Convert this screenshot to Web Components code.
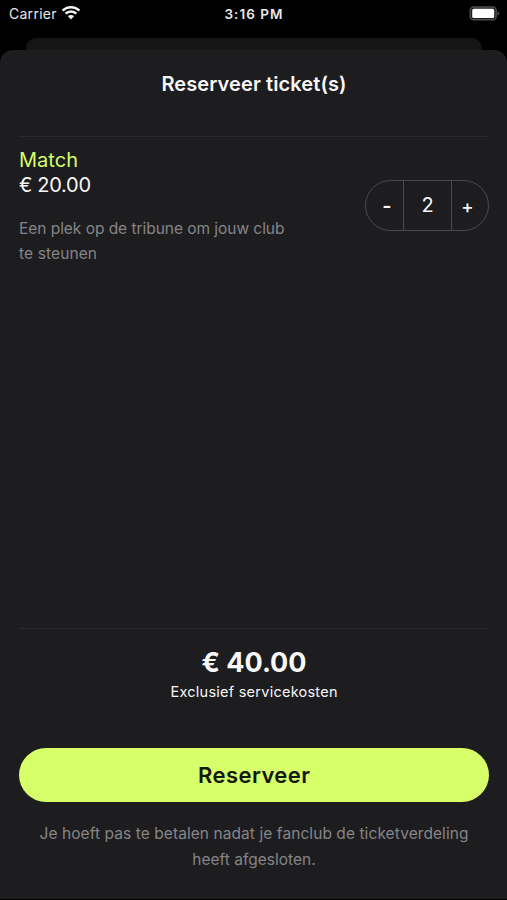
<!DOCTYPE html>
<html lang="nl">
<head>
<meta charset="utf-8">
<title>Reserveer ticket(s)</title>
<style>
html, body { margin: 0; height: 100%; background: #000; overflow: hidden; }
body { font-family: Inter, "Liberation Sans", sans-serif; color: #f7f7f8; }
</style>
</head>
<body>
<ticket-app></ticket-app>
<script>
const define = (name, html) => customElements.define(name, class extends HTMLElement {
  constructor() {
    super();
    this.attachShadow({ mode: 'open' }).innerHTML = html;
  }
});

// One line of text, tracked so that it fills the measure given in "width".
customElements.define('text-line', class extends HTMLElement {
  connectedCallback() {
    const root = this.attachShadow({ mode: 'open' });
    root.innerHTML = `<style>
      :host { display: block; white-space: nowrap; }
      span { display: inline-block; }
    </style><span></span>`;
    const span = root.querySelector('span');
    span.textContent = this.getAttribute('text');
    const measure = parseFloat(this.getAttribute('width'));
    const count = span.textContent.length;
    const gap = (measure - span.getBoundingClientRect().width) / (count - 1);
    span.style.letterSpacing = gap.toFixed(3) + 'px';
    span.style.marginRight = (-gap).toFixed(3) + 'px';
  }
});

define('wifi-icon', `<style>:host { display: block; width: 20px; height: 15px; } svg { display: block; }</style>
<svg width="20" height="15" viewBox="0 0 20 15" fill="none" stroke="#f4f4f4" stroke-width="2.5">
  <path d="M1.6 5.6 C6.2 1 13.8 1 18.4 5.6"/>
  <path d="M4.6 8.7 C7.6 5.8 12.4 5.8 15.4 8.7"/>
  <path d="M10 14.4 L6.9 11.2 C8.6 9.6 11.4 9.6 13.1 11.2Z" fill="#f4f4f4" stroke="none"/>
</svg>`);

define('battery-icon', `<style>:host { display: block; width: 31px; height: 15px; } svg { display: block; }</style>
<svg width="31" height="15" viewBox="0 0 31 15">
  <rect x="1.2" y="1" width="26" height="12.8" rx="3.6" fill="#1c1c1d" stroke="#4e4e50" stroke-width="1.4"/>
  <rect x="3.2" y="2.8" width="22" height="9.2" rx="1.6" fill="#fff"/>
  <path d="M28.6 5.2 C30.6 5.8 30.6 9 28.6 9.6Z" fill="#58585a"/>
</svg>`);

define('status-bar', `<style>
  :host { display: grid; grid-template-columns: 1fr auto 1fr; height: 38px; box-sizing: border-box; padding: 5px 7px 0 9px; font-size: 14px; line-height: 18px; color: #e9e9e9; }
  .left { display: flex; gap: 4.5px; }
  .time { font-weight: 600; font-size: 13.5px; margin-left: -2px; }
  battery-icon { justify-self: end; margin-top: 1px; }
</style>
<div class="left"><text-line text="Carrier" width="47.5"></text-line><wifi-icon></wifi-icon></div>
<text-line class="time" text="3:16 PM" width="58"></text-line>
<battery-icon></battery-icon>`);

define('amount-stepper', `<style>
  :host { display: grid; grid-template-columns: 37px 49px 36px; box-sizing: border-box; width: 124px; height: 51px; border: 1px solid #4a4a4d; border-radius: 26px; font-size: 20px; }
  div { display: flex; align-items: center; justify-content: center; }
  .value { border: solid #4a4a4d; border-width: 0 1px; }
  .sign { font-weight: 600; padding: 1px 0 0 5px; }
  .plus { padding-left: 0; padding-right: 5px; font-size: 18.5px; font-weight: 500; }
</style>
<div class="sign">-</div><div class="value">2</div><div class="sign plus">+</div>`);

define('ticket-item', `<style>
  :host { display: flex; justify-content: space-between; align-items: flex-start; padding: 11px 0 0; }
  .name, .price { font-size: 20px; line-height: 25px; }
  .name { color: #d6ff69; }
  .info { margin-top: 18px; font-size: 15.5px; line-height: 25.5px; color: #858587; }
  amount-stepper { margin-top: 32px; }
</style>
<div>
  <text-line class="name" text="Match" width="59"></text-line>
  <text-line class="price" text="€ 20.00" width="72"></text-line>
  <div class="info">
    <text-line text="Een plek op de tribune om jouw club" width="265.5"></text-line>
    <text-line text="te steunen" width="78"></text-line>
  </div>
</div>
<amount-stepper></amount-stepper>`);

define('order-footer', `<style>
  :host { display: flex; flex-direction: column; align-items: center; height: 270px; border-top: 1px solid #29292b; }
  .total { margin-top: 17px; font-size: 27px; line-height: 34px; font-weight: 700; }
  .costs { margin-top: 2px; font-size: 14.5px; line-height: 20px; }
  button { appearance: none; margin: 46px 0 0; border: 0; padding: 0; width: 100%; height: 53.5px; border-radius: 27px; background: #d6ff69; color: #12180b; font: 600 22px/54px Inter, sans-serif; display: flex; justify-content: center; }
  .note { margin-top: 19.5px; display: flex; flex-direction: column; align-items: center; font-size: 15.5px; line-height: 25.5px; color: #858587; }
</style>
<text-line class="total" text="€ 40.00" width="105"></text-line>
<text-line class="costs" text="Exclusief servicekosten" width="167"></text-line>
<button><text-line text="Reserveer" width="112"></text-line></button>
<div class="note">
  <text-line text="Je hoeft pas te betalen nadat je fanclub de ticketverdeling" width="429"></text-line>
  <text-line text="heeft afgesloten." width="123.5"></text-line>
</div>`);

define('modal-sheet', `<style>
  :host { display: flex; flex-direction: column; box-sizing: border-box; height: 849.5px; padding: 0 18px 0 19px; border-radius: 13px 13px 0 0; background: #1d1d1f; }
  header { display: flex; justify-content: center; height: 87px; box-sizing: border-box; padding-top: 22px; border-bottom: 1px solid #29292b; font-size: 20px; line-height: 25px; font-weight: 600; }
  main { flex: 1; }
</style>
<header><slot name="title"></slot></header>
<main><slot></slot></main>
<slot name="footer"></slot>`);

define('ticket-app', `<style>
  :host { display: flex; flex-direction: column; width: 507px; height: 900px; overflow: hidden; background: #000; }
  .behind { height: 26px; flex: none; margin: 0 25px 0 26px; border-radius: 10px 10px 0 0; background: #151515; }
  modal-sheet { flex: none; margin-top: -14.5px; }
</style>
<status-bar></status-bar>
<div class="behind"></div>
<modal-sheet>
  <text-line slot="title" text="Reserveer ticket(s)" width="185"></text-line>
  <ticket-item></ticket-item>
  <order-footer slot="footer"></order-footer>
</modal-sheet>`);
</script>
</body>
</html>
